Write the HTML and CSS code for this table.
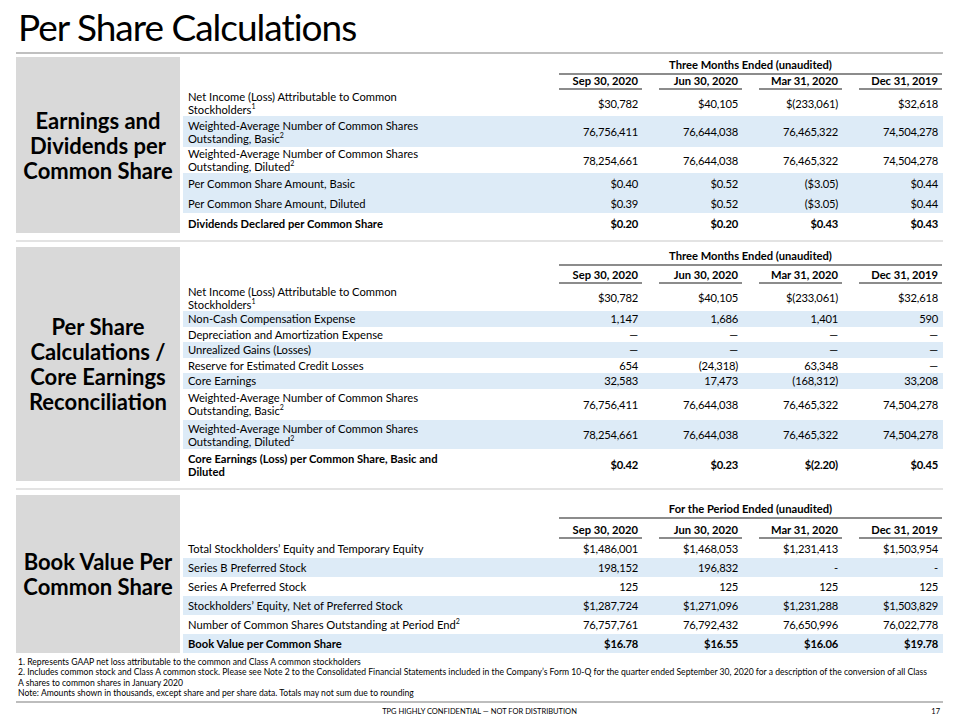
FILE: index.html
```html
<!DOCTYPE html>
<html lang="en">
  <head>
    <meta charset="UTF-8" />
    <meta name="viewport" content="width=device-width, initial-scale=1.0" />
    <title>Per Share Calculations</title>
    <link rel="stylesheet" href="styles.css">
  </head>
  <body>
    <div class="slide">
      <h1 class="title">Per Share Calculations</h1>

      <!-- Earnings and dividends -->
      <section class="block eps">
        <div class="panel">Earnings and<br />Dividends per<br />Common Share</div>
        <div class="tbl">
          <div class="row head-group"><span class="group">Three Months Ended (unaudited)</span></div>
          <div class="row head-dates">
            <span></span>
            <span class="date">Sep 30, 2020</span>
            <span class="date">Jun 30, 2020</span>
            <span class="date">Mar 31, 2020</span>
            <span class="date">Dec 31, 2019</span>
          </div>
          <div class="row line2">
            <span class="label">Net Income (Loss) Attributable to Common<br />Stockholders<sup>1</sup></span>
            <span class="num">$30,782</span>
            <span class="num">$40,105</span>
            <span class="num">$(233,061)</span>
            <span class="num">$32,618</span>
          </div>
          <div class="row line2 tall alt">
            <span class="label">Weighted-Average Number of Common Shares<br />Outstanding, Basic<sup>2</sup></span>
            <span class="num">76,756,411</span>
            <span class="num">76,644,038</span>
            <span class="num">76,465,322</span>
            <span class="num">74,504,278</span>
          </div>
          <div class="row line2">
            <span class="label">Weighted-Average Number of Common Shares<br />Outstanding, Diluted<sup>2</sup></span>
            <span class="num">78,254,661</span>
            <span class="num">76,644,038</span>
            <span class="num">76,465,322</span>
            <span class="num">74,504,278</span>
          </div>
          <div class="row line alt">
            <span class="label">Per Common Share Amount, Basic</span>
            <span class="num">$0.40</span>
            <span class="num">$0.52</span>
            <span class="num">($3.05)</span>
            <span class="num">$0.44</span>
          </div>
          <div class="row line alt">
            <span class="label">Per Common Share Amount, Diluted</span>
            <span class="num">$0.39</span>
            <span class="num">$0.52</span>
            <span class="num">($3.05)</span>
            <span class="num">$0.44</span>
          </div>
          <div class="row line total">
            <span class="label">Dividends Declared per Common Share</span>
            <span class="num">$0.20</span>
            <span class="num">$0.20</span>
            <span class="num">$0.43</span>
            <span class="num">$0.43</span>
          </div>
        </div>
      </section>

      <div class="sep"></div>

      <!-- Core earnings reconciliation -->
      <section class="block core">
        <div class="panel">Per Share<br />Calculations /<br />Core Earnings<br />Reconciliation</div>
        <div class="tbl">
          <div class="row head-group"><span class="group">Three Months Ended (unaudited)</span></div>
          <div class="row head-dates">
            <span></span>
            <span class="date">Sep 30, 2020</span>
            <span class="date">Jun 30, 2020</span>
            <span class="date">Mar 31, 2020</span>
            <span class="date">Dec 31, 2019</span>
          </div>
          <div class="row line2 short">
            <span class="label">Net Income (Loss) Attributable to Common<br />Stockholders<sup>1</sup></span>
            <span class="num">$30,782</span>
            <span class="num">$40,105</span>
            <span class="num">$(233,061)</span>
            <span class="num">$32,618</span>
          </div>
          <div class="row line alt">
            <span class="label">Non-Cash Compensation Expense</span>
            <span class="num">1,147</span>
            <span class="num">1,686</span>
            <span class="num">1,401</span>
            <span class="num">590</span>
          </div>
          <div class="row line">
            <span class="label">Depreciation and Amortization Expense</span>
            <span class="num">—</span>
            <span class="num">—</span>
            <span class="num">—</span>
            <span class="num">—</span>
          </div>
          <div class="row line alt">
            <span class="label">Unrealized Gains (Losses)</span>
            <span class="num">—</span>
            <span class="num">—</span>
            <span class="num">—</span>
            <span class="num">—</span>
          </div>
          <div class="row line">
            <span class="label">Reserve for Estimated Credit Losses</span>
            <span class="num">654</span>
            <span class="num">(24,318)</span>
            <span class="num">63,348</span>
            <span class="num">—</span>
          </div>
          <div class="row line alt">
            <span class="label">Core Earnings</span>
            <span class="num">32,583</span>
            <span class="num">17,473</span>
            <span class="num">(168,312)</span>
            <span class="num">33,208</span>
          </div>
          <div class="row line2 tall">
            <span class="label">Weighted-Average Number of Common Shares<br />Outstanding, Basic<sup>2</sup></span>
            <span class="num">76,756,411</span>
            <span class="num">76,644,038</span>
            <span class="num">76,465,322</span>
            <span class="num">74,504,278</span>
          </div>
          <div class="row line2 alt">
            <span class="label">Weighted-Average Number of Common Shares<br />Outstanding, Diluted<sup>2</sup></span>
            <span class="num">78,254,661</span>
            <span class="num">76,644,038</span>
            <span class="num">76,465,322</span>
            <span class="num">74,504,278</span>
          </div>
          <div class="row line2 tall total">
            <span class="label">Core Earnings (Loss) per Common Share, Basic and<br />Diluted</span>
            <span class="num">$0.42</span>
            <span class="num">$0.23</span>
            <span class="num">$(2.20)</span>
            <span class="num">$0.45</span>
          </div>
        </div>
      </section>

      <div class="sep"></div>

      <!-- Book value -->
      <section class="block bv">
        <div class="panel">Book Value Per<br />Common Share</div>
        <div class="tbl">
          <div class="row head-group"><span class="group">For the Period Ended (unaudited)</span></div>
          <div class="row head-dates">
            <span></span>
            <span class="date">Sep 30, 2020</span>
            <span class="date">Jun 30, 2020</span>
            <span class="date">Mar 31, 2020</span>
            <span class="date">Dec 31, 2019</span>
          </div>
          <div class="row line">
            <span class="label">Total Stockholders’ Equity and Temporary Equity</span>
            <span class="num">$1,486,001</span>
            <span class="num">$1,468,053</span>
            <span class="num">$1,231,413</span>
            <span class="num">$1,503,954</span>
          </div>
          <div class="row line alt">
            <span class="label">Series B Preferred Stock</span>
            <span class="num">198,152</span>
            <span class="num">196,832</span>
            <span class="num">-</span>
            <span class="num">-</span>
          </div>
          <div class="row line">
            <span class="label">Series A Preferred Stock</span>
            <span class="num">125</span>
            <span class="num">125</span>
            <span class="num">125</span>
            <span class="num">125</span>
          </div>
          <div class="row line alt">
            <span class="label">Stockholders’ Equity, Net of Preferred Stock</span>
            <span class="num">$1,287,724</span>
            <span class="num">$1,271,096</span>
            <span class="num">$1,231,288</span>
            <span class="num">$1,503,829</span>
          </div>
          <div class="row line">
            <span class="label">Number of Common Shares Outstanding at Period End<sup>2</sup></span>
            <span class="num">76,757,761</span>
            <span class="num">76,792,432</span>
            <span class="num">76,650,996</span>
            <span class="num">76,022,778</span>
          </div>
          <div class="row line alt total">
            <span class="label">Book Value per Common Share</span>
            <span class="num">$16.78</span>
            <span class="num">$16.55</span>
            <span class="num">$16.06</span>
            <span class="num">$19.78</span>
          </div>
        </div>
      </section>

      <div class="notes">
        <p>1. Represents GAAP net loss attributable to the common and Class A common stockholders</p>
        <p>2. Includes common stock and Class A common stock. Please see Note 2 to the Consolidated Financial Statements included in the Company’s Form 10-Q for the quarter ended September 30, 2020 for a description of the conversion of all Class<br />A shares to common shares in January 2020</p>
        <p>Note: Amounts shown in thousands, except share and per share data. Totals may not sum due to rounding</p>
      </div>

      <footer class="footer">
        <span class="conf">TPG HIGHLY CONFIDENTIAL — NOT FOR DISTRIBUTION</span>
        <span class="page">17</span>
      </footer>
    </div>
  </body>
</html>
```

FILE: styles.css
```css
* {
  box-sizing: border-box;
}
body {
  margin: 0;
  background-color: white;
  color: black;
  font-family: Lato, "Open Sans", sans-serif;
}
.slide {
  width: 960px;
  height: 720px;
  padding: 0 17px 0 16px;
  overflow: hidden;
}
.title {
  margin: 0 0 3px;
  padding-left: 2px;
  height: 54px;
  font-size: 37px;
  font-weight: 400;
  line-height: 54px;
  letter-spacing: -1px;
  font-variant-ligatures: none;
  border-bottom: 2px solid #c0c0c0;
}
.block {
  display: flex;
  gap: 3px;
}
.panel {
  width: 164px;
  flex: none;
  display: flex;
  align-items: center;
  justify-content: center;
  text-align: center;
  background-color: #d9d9d9;
  font-size: 22px;
  font-weight: 700;
  line-height: 25px;
}
.tbl {
  flex: 1;
  font-size: 11.2px;
}
.row {
  display: grid;
  grid-template-columns: 359px repeat(4, 83px);
  column-gap: 17px;
  align-items: center;
}
.alt {
  background-color: #ddebf7;
}
.total {
  font-weight: 700;
}
.label {
  padding-left: 5px;
  line-height: 13px;
  white-space: nowrap;
}
.num {
  text-align: right;
  padding-right: 4px;
  letter-spacing: -0.2px;
}
sup {
  font-size: 7px;
  line-height: 0;
  vertical-align: 5px;
}
.head-group {
  align-items: end;
  font-weight: 700;
}
.group {
  grid-column: 2 / 6;
  text-align: center;
  border-bottom: 2px solid #8c8c8c;
  line-height: 14px;
  padding-bottom: 1px;
}
.head-dates {
  align-items: end;
  font-weight: 700;
}
.date {
  text-align: right;
  padding-right: 4px;
  line-height: 12px;
  padding-bottom: 1px;
  border-bottom: 2px solid #8c8c8c;
}
.sep {
  height: 2px;
  margin: 7px 0 5px;
  background-color: #e3e3e3;
}

/* section row heights */
.eps .head-group {
  height: 18px;
}
.eps .head-dates {
  height: 15px;
}
.eps .line {
  height: 20px;
}
.eps .line2 {
  height: 26px;
}
.eps .line2.tall {
  height: 31px;
}
.core .head-group {
  height: 19px;
}
.core .head-dates {
  height: 18px;
}
.core .line {
  height: 15.5px;
}
.core .line2 {
  height: 29px;
}
.core .line2.short {
  height: 27px;
}
.core .line2.tall {
  height: 31.5px;
}
.bv .head-group {
  height: 24px;
}
.bv .head-dates {
  height: 20px;
}
.bv .line {
  height: 19px;
}

.notes {
  padding-top: 4px;
  height: 48px;
  font-size: 8.6px;
  line-height: 10.5px;
  white-space: nowrap;
}
.notes p {
  margin: 0;
  padding-left: 2px;
}
.footer {
  position: relative;
  border-top: 2px solid #bdbdbd;
  height: 19px;
  font-size: 7.5px;
  line-height: 17px;
  text-align: center;
}
.page {
  position: absolute;
  right: 3px;
  top: 0;
}
```
